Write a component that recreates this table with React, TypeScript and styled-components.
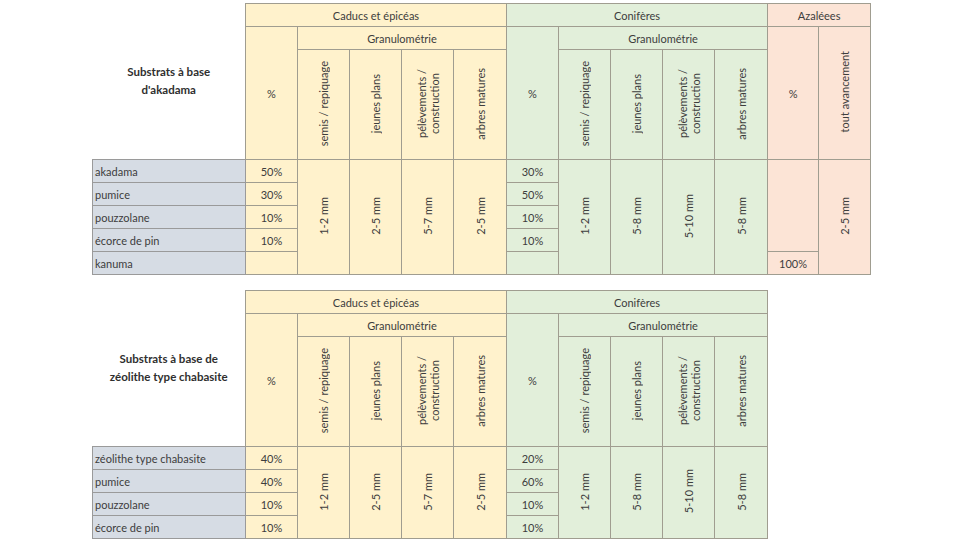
import React from 'react';
import styled, { createGlobalStyle } from 'styled-components';

type Tone = 'caducs' | 'coniferes' | 'azalees' | 'label';

const tones: Record<Tone, string> = {
  caducs: '#fff2cc',
  coniferes: '#e2efda',
  azalees: '#fce4d6',
  label: '#d6dce4',
};

const GlobalStyle = createGlobalStyle`
  body {
    margin: 0;
    background: #ffffff;
    font-family: Lato, 'Open Sans', sans-serif;
    color: #3d3d3d;
  }
`;

const Page = styled.div`
  display: flex;
  flex-direction: column;
  gap: 15px;
  padding: 3px 0 0 92px;
`;

const Table = styled.table`
  border-collapse: collapse;
  table-layout: fixed;
  font-size: 11px;
`;

const Row = styled.tr<{ $h: number }>`
  height: ${(p) => p.$h}px;
`;

const TitleCell = styled.td`
  border: none;
  text-align: center;
  vertical-align: middle;
  font-weight: 700;
  font-size: 11.5px;
  line-height: 18px;
  color: #2f2f2f;
  padding: 0;
`;

const Cell = styled.td<{ $tone: Tone }>`
  border: 1px solid #a09d90;
  background: ${(p) => tones[p.$tone]};
  text-align: center;
  vertical-align: middle;
  padding: 0;
  white-space: nowrap;
  overflow: hidden;
`;

const LabelCell = styled(Cell)`
  text-align: left;
  padding-left: 2px;
  border-color: #9a9a9a;
`;

const VertText = styled.span`
  display: inline-block;
  writing-mode: vertical-rl;
  transform: rotate(180deg);
  line-height: 13px;
  text-align: center;
`;

type Section = { tone: Tone; title: string; widths: number[]; pcts: string[]; sizes: string[] };

const VerticalHeads = ['semis / repiquage', 'jeunes plans', 'pélèvements /\nconstruction', 'arbres matures'];

const Vert = ({ text }: { text: string }) => (
  <VertText>
    {text.split('\n').map((l, i) => (
      <React.Fragment key={i}>
        {i > 0 && <br />}
        {l}
      </React.Fragment>
    ))}
  </VertText>
);

type TableProps = {
  title: string[];
  rows: string[];
  sections: Section[];
  azalee?: { pct: string; size: string };
};

const SubstrateTable = ({ title, rows, sections, azalee }: TableProps) => {
  const widths = [153, ...sections.flatMap((s) => s.widths), ...(azalee ? [51, 52] : [])];
  const total = widths.reduce((a, b) => a + b, 0);
  const n = rows.length;
  return (
    <Table style={{ width: total }}>
      <colgroup>
        {widths.map((w, i) => (
          <col key={i} style={{ width: w }} />
        ))}
      </colgroup>
      <tbody>
        <Row $h={23}>
          <TitleCell rowSpan={3}>
            {title[0]}
            <br />
            {title[1]}
          </TitleCell>
          {sections.map((s) => (
            <Cell key={s.title} $tone={s.tone} colSpan={5}>
              {s.title}
            </Cell>
          ))}
          {azalee && (
            <Cell $tone="azalees" colSpan={2}>
              Azaléees
            </Cell>
          )}
        </Row>
        <Row $h={23}>
          {sections.map((s) => (
            <React.Fragment key={s.title}>
              <Cell $tone={s.tone} rowSpan={2}>
                %
              </Cell>
              <Cell $tone={s.tone} colSpan={4}>
                Granulométrie
              </Cell>
            </React.Fragment>
          ))}
          {azalee && (
            <>
              <Cell $tone="azalees" rowSpan={2}>
                %
              </Cell>
              <Cell $tone="azalees" rowSpan={2}>
                <Vert text="tout avancement" />
              </Cell>
            </>
          )}
        </Row>
        <Row $h={110}>
          {sections.map((s) =>
            VerticalHeads.map((h) => (
              <Cell key={s.title + h} $tone={s.tone}>
                <Vert text={h} />
              </Cell>
            ))
          )}
        </Row>
        {rows.map((r, i) => (
          <Row $h={23} key={r}>
            <LabelCell $tone="label">{r}</LabelCell>
            {sections.map((s) => (
              <React.Fragment key={s.title}>
                <Cell $tone={s.tone}>{s.pcts[i] ?? ''}</Cell>
                {i === 0 &&
                  s.sizes.map((z, j) => (
                    <Cell key={j} $tone={s.tone} rowSpan={n}>
                      <Vert text={z} />
                    </Cell>
                  ))}
              </React.Fragment>
            ))}
            {azalee && i === 0 && (
              <>
                <Cell $tone="azalees" rowSpan={n - 1} />
                <Cell $tone="azalees" rowSpan={n}>
                  <Vert text={azalee.size} />
                </Cell>
              </>
            )}
            {azalee && i === n - 1 && <Cell $tone="azalees">{azalee.pct}</Cell>}
          </Row>
        ))}
      </tbody>
    </Table>
  );
};

const App = () => (
  <>
    <GlobalStyle />
    <Page>
      <SubstrateTable
        title={['Substrats à base', "d'akadama"]}
        rows={['akadama', 'pumice', 'pouzzolane', 'écorce de pin', 'kanuma']}
        sections={[
          {
            tone: 'caducs',
            title: 'Caducs et épicéas',
            widths: [52, 52, 52, 52, 53],
            pcts: ['50%', '30%', '10%', '10%', ''],
            sizes: ['1-2 mm', '2-5 mm', '5-7 mm', '2-5 mm'],
          },
          {
            tone: 'coniferes',
            title: 'Conifères',
            widths: [52, 52, 52, 52, 53],
            pcts: ['30%', '50%', '10%', '10%', ''],
            sizes: ['1-2 mm', '5-8 mm', '5-10 mm', '5-8 mm'],
          },
        ]}
        azalee={{ pct: '100%', size: '2-5 mm' }}
      />
      <SubstrateTable
        title={['Substrats à base de', 'zéolithe type chabasite']}
        rows={['zéolithe type chabasite', 'pumice', 'pouzzolane', 'écorce de pin']}
        sections={[
          {
            tone: 'caducs',
            title: 'Caducs et épicéas',
            widths: [52, 52, 52, 52, 53],
            pcts: ['40%', '40%', '10%', '10%'],
            sizes: ['1-2 mm', '2-5 mm', '5-7 mm', '2-5 mm'],
          },
          {
            tone: 'coniferes',
            title: 'Conifères',
            widths: [52, 52, 52, 52, 53],
            pcts: ['20%', '60%', '10%', '10%'],
            sizes: ['1-2 mm', '5-8 mm', '5-10 mm', '5-8 mm'],
          },
        ]}
      />
    </Page>
  </>
);

export default App;
